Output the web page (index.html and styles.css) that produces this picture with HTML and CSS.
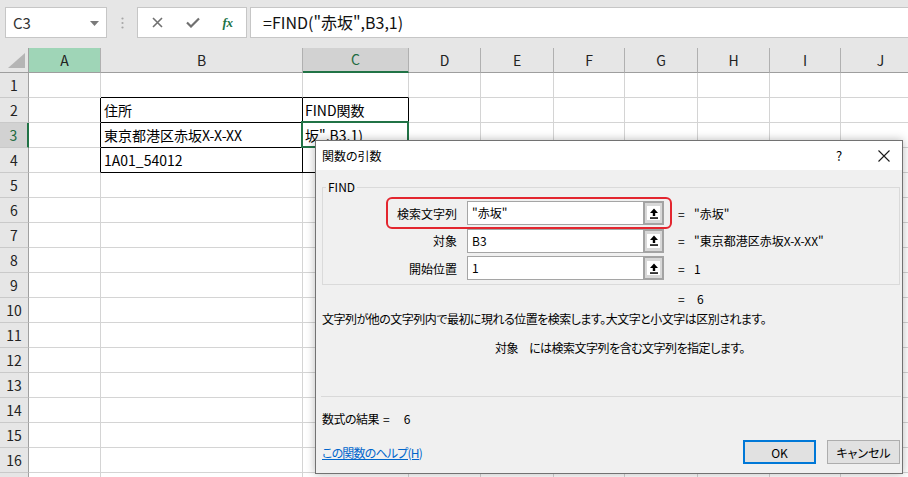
FILE: index.html
```html
<!DOCTYPE html>
<html lang="ja">
<head>
<meta charset="utf-8">
<title>関数の引数</title>
<link rel="stylesheet" href="styles.css">
</head>
<body>
<div class="app">
  <div class="toolbar">
    <div class="namebox">
      <span class="nb-text">C3</span>
      <svg class="caret" width="9" height="5" viewBox="0 0 9 5"><path d="M0 0H9L4.5 5Z" fill="#7a7a7a"/></svg>
    </div>
    <div class="grip">
      <svg width="3" height="12" viewBox="0 0 3 12"><circle cx="1.5" cy="1.5" r="1.1" fill="#a6a6a6"/><circle cx="1.5" cy="6" r="1.1" fill="#a6a6a6"/><circle cx="1.5" cy="10.5" r="1.1" fill="#a6a6a6"/></svg>
    </div>
    <div class="fxbox">
      <span class="fxslot"><svg width="11" height="11" viewBox="0 0 11 11"><path d="M1 1L10 10M10 1L1 10" stroke="#707070" stroke-width="1.6"/></svg></span>
      <span class="fxslot"><svg width="14" height="11" viewBox="0 0 14 11"><path d="M1 5.5L5 9.5L13 1.5" fill="none" stroke="#707070" stroke-width="2.2"/></svg></span>
      <span class="fxslot fx">fx</span>
    </div>
    <div class="formula">=FIND("赤坂",B3,1)</div>
  </div>

  <div class="sheet">
    <div class="row hdr">
      <div class="c rh corner"><svg width="28" height="24" viewBox="0 0 28 24"><path d="M8 20H25V5Z" fill="#b5b5b5"/></svg></div>
      <div class="c ca sel-a">A</div><div class="c cb">B</div><div class="c cc sel-c">C</div><div class="c cd">D</div><div class="c ce">E</div><div class="c cf">F</div><div class="c cg">G</div><div class="c ch">H</div><div class="c ci">I</div><div class="c cj">J</div>
    </div>
    <div class="row"><div class="c rh">1</div><div class="c ca"></div><div class="c cb bB"></div><div class="c cc bB"></div><div class="c cd"></div><div class="c ce"></div><div class="c cf"></div><div class="c cg"></div><div class="c ch"></div><div class="c ci"></div><div class="c cj"></div></div>
    <div class="row"><div class="c rh">2</div><div class="c ca bR"></div><div class="c cb bR bB">住所</div><div class="c cc bR bB">FIND関数</div><div class="c cd"></div><div class="c ce"></div><div class="c cf"></div><div class="c cg"></div><div class="c ch"></div><div class="c ci"></div><div class="c cj"></div></div>
    <div class="row"><div class="c rh sel-r">3</div><div class="c ca bR"></div><div class="c cb bR bB">東京都港区赤坂X-X-XX</div><div class="c cc bR bB active">坂",B3,1)</div><div class="c cd"></div><div class="c ce"></div><div class="c cf"></div><div class="c cg"></div><div class="c ch"></div><div class="c ci"></div><div class="c cj"></div></div>
    <div class="row"><div class="c rh">4</div><div class="c ca bR"></div><div class="c cb bR bB">1A01_54012</div><div class="c cc bR bB"></div><div class="c cd"></div><div class="c ce"></div><div class="c cf"></div><div class="c cg"></div><div class="c ch"></div><div class="c ci"></div><div class="c cj"></div></div>
    <div class="row"><div class="c rh">5</div><div class="c ca"></div><div class="c cb"></div><div class="c cc"></div><div class="c cd"></div><div class="c ce"></div><div class="c cf"></div><div class="c cg"></div><div class="c ch"></div><div class="c ci"></div><div class="c cj"></div></div>
    <div class="row"><div class="c rh">6</div><div class="c ca"></div><div class="c cb"></div><div class="c cc"></div><div class="c cd"></div><div class="c ce"></div><div class="c cf"></div><div class="c cg"></div><div class="c ch"></div><div class="c ci"></div><div class="c cj"></div></div>
    <div class="row"><div class="c rh">7</div><div class="c ca"></div><div class="c cb"></div><div class="c cc"></div><div class="c cd"></div><div class="c ce"></div><div class="c cf"></div><div class="c cg"></div><div class="c ch"></div><div class="c ci"></div><div class="c cj"></div></div>
    <div class="row"><div class="c rh">8</div><div class="c ca"></div><div class="c cb"></div><div class="c cc"></div><div class="c cd"></div><div class="c ce"></div><div class="c cf"></div><div class="c cg"></div><div class="c ch"></div><div class="c ci"></div><div class="c cj"></div></div>
    <div class="row"><div class="c rh">9</div><div class="c ca"></div><div class="c cb"></div><div class="c cc"></div><div class="c cd"></div><div class="c ce"></div><div class="c cf"></div><div class="c cg"></div><div class="c ch"></div><div class="c ci"></div><div class="c cj"></div></div>
    <div class="row"><div class="c rh">10</div><div class="c ca"></div><div class="c cb"></div><div class="c cc"></div><div class="c cd"></div><div class="c ce"></div><div class="c cf"></div><div class="c cg"></div><div class="c ch"></div><div class="c ci"></div><div class="c cj"></div></div>
    <div class="row"><div class="c rh">11</div><div class="c ca"></div><div class="c cb"></div><div class="c cc"></div><div class="c cd"></div><div class="c ce"></div><div class="c cf"></div><div class="c cg"></div><div class="c ch"></div><div class="c ci"></div><div class="c cj"></div></div>
    <div class="row"><div class="c rh">12</div><div class="c ca"></div><div class="c cb"></div><div class="c cc"></div><div class="c cd"></div><div class="c ce"></div><div class="c cf"></div><div class="c cg"></div><div class="c ch"></div><div class="c ci"></div><div class="c cj"></div></div>
    <div class="row"><div class="c rh">13</div><div class="c ca"></div><div class="c cb"></div><div class="c cc"></div><div class="c cd"></div><div class="c ce"></div><div class="c cf"></div><div class="c cg"></div><div class="c ch"></div><div class="c ci"></div><div class="c cj"></div></div>
    <div class="row"><div class="c rh">14</div><div class="c ca"></div><div class="c cb"></div><div class="c cc"></div><div class="c cd"></div><div class="c ce"></div><div class="c cf"></div><div class="c cg"></div><div class="c ch"></div><div class="c ci"></div><div class="c cj"></div></div>
    <div class="row"><div class="c rh">15</div><div class="c ca"></div><div class="c cb"></div><div class="c cc"></div><div class="c cd"></div><div class="c ce"></div><div class="c cf"></div><div class="c cg"></div><div class="c ch"></div><div class="c ci"></div><div class="c cj"></div></div>
    <div class="row"><div class="c rh">16</div><div class="c ca"></div><div class="c cb"></div><div class="c cc"></div><div class="c cd"></div><div class="c ce"></div><div class="c cf"></div><div class="c cg"></div><div class="c ch"></div><div class="c ci"></div><div class="c cj"></div></div>
    <div class="row"><div class="c rh"></div><div class="c ca"></div><div class="c cb"></div><div class="c cc"></div><div class="c cd"></div><div class="c ce"></div><div class="c cf"></div><div class="c cg"></div><div class="c ch"></div><div class="c ci"></div><div class="c cj"></div></div>
  </div>

  <div class="dialog">
    <div class="titlebar">
      <span class="title">関数の引数</span>
      <span class="help">?</span>
      <span class="close"><svg width="12" height="12" viewBox="0 0 12 12"><path d="M0.5 0.5L11.5 11.5M11.5 0.5L0.5 11.5" stroke="#1a1a1a" stroke-width="1.1"/></svg></span>
    </div>
    <div class="dbody">
      <fieldset class="group">
        <legend>FIND</legend>
        <div class="args">
          <div class="hl"></div>
          <div class="lbl">検索文字列</div>
          <div class="field"><span class="fval">"赤坂"</span><span class="pick"><span class="pick-in"><svg width="10" height="11" viewBox="0 0 10 11"><path d="M5 0.5L9 5H6.2V8H3.8V5H1Z" fill="#000"/><rect x="1" y="9.3" width="8" height="1.5" fill="#000"/></svg></span></span></div>
          <div class="res"><span class="eq">=</span><span>"赤坂"</span></div>

          <div class="lbl">対象</div>
          <div class="field"><span class="fval">B3</span><span class="pick"><span class="pick-in"><svg width="10" height="11" viewBox="0 0 10 11"><path d="M5 0.5L9 5H6.2V8H3.8V5H1Z" fill="#000"/><rect x="1" y="9.3" width="8" height="1.5" fill="#000"/></svg></span></span></div>
          <div class="res"><span class="eq">=</span><span>"東京都港区赤坂X-X-XX"</span></div>

          <div class="lbl">開始位置</div>
          <div class="field"><span class="fval">1</span><span class="pick"><span class="pick-in"><svg width="10" height="11" viewBox="0 0 10 11"><path d="M5 0.5L9 5H6.2V8H3.8V5H1Z" fill="#000"/><rect x="1" y="9.3" width="8" height="1.5" fill="#000"/></svg></span></span></div>
          <div class="res"><span class="eq">=</span><span>1</span></div>
        </div>
      </fieldset>
      <div class="total"><span class="eq2">=</span><span>6</span></div>
      <p class="desc">文字列が他の文字列内で最初に現れる位置を検索します。大文字と小文字は区別されます。</p>
      <p class="desc2"><span class="argname">対象</span><span>には検索文字列を含む文字列を指定します。</span></p>
      <div class="sep"></div>
      <div class="result"><span class="rlabel">数式の結果</span><span class="req">=</span><span class="rval">6</span></div>
      <div class="footer">
        <a class="helplink" href="#">この関数のヘルプ(H)</a>
        <span class="btn ok">OK</span>
        <span class="btn cancel">キャンセル</span>
      </div>
    </div>
  </div>
</div>
</body>
</html>
```

FILE: styles.css
```css
html, body {
  margin: 0;
  padding: 0;
  background: #ffffff;
}
body {
  font-family: "Noto Sans CJK JP", "Noto Sans", sans-serif;
  color: #000;
}
.app {
  position: relative;
  width: 908px;
  height: 477px;
  overflow: hidden;
}

/* ---------- toolbar ---------- */
.toolbar {
  display: flex;
  align-items: flex-start;
  height: 48px;
  box-sizing: border-box;
  padding: 7px 0 0 5px;
  background: #e6e6e6;
}
.namebox {
  box-sizing: border-box;
  width: 102px;
  height: 31px;
  background: #fff;
  border: 1px solid #c6c6c6;
  display: flex;
  align-items: center;
  padding: 0 7px 0 7px;
}
.nb-text {
  flex: 1;
  font-size: 15px;
  color: #333;
  line-height: 29px;
}
.caret { margin-top: 1px; }
.grip {
  width: 30px;
  height: 31px;
  display: flex;
  align-items: center;
  justify-content: center;
}
.fxbox {
  box-sizing: border-box;
  width: 110px;
  height: 31px;
  background: #fff;
  border: 1px solid #c6c6c6;
  display: flex;
  align-items: center;
  padding-left: 2px;
}
.fxslot {
  width: 35px;
  display: flex;
  justify-content: center;
  align-items: center;
}
.fx {
  font-family: "Liberation Serif", serif;
  font-style: italic;
  font-weight: bold;
  font-size: 13px;
  color: #217346;
  letter-spacing: -0.5px;
}
.formula {
  flex: 1;
  margin-left: 3px;
  box-sizing: border-box;
  height: 31px;
  background: #fff;
  border: 1px solid #c6c6c6;
  border-right: none;
  padding-left: 12px;
  font-size: 16px;
  line-height: 29px;
  color: #111;
  white-space: nowrap;
}

/* ---------- sheet ---------- */
.row {
  display: flex;
  height: 25px;
}
.c {
  box-sizing: border-box;
  flex: none;
  height: 25px;
  border-right: 1px solid #d4d4d4;
  border-bottom: 1px solid #d4d4d4;
  font-size: 14px;
  line-height: 24px;
  padding-left: 3px;
  white-space: nowrap;
}
.ca { width: 72px; }
.cb { width: 202px; }
.cc { width: 106px; padding-left: 2px; }
.cd { width: 72px; }
.ce { width: 73px; }
.cf { width: 71px; }
.cg { width: 73px; }
.ch { width: 72px; }
.ci { width: 71px; }
.cj { width: 80px; }

.rh {
  width: 29px;
  padding: 0;
  text-align: center;
  background: #e6e6e6;
  border-right-color: #a0a0a0;
  border-bottom-color: #c9c9c9;
  font-size: 14px;
  color: #222;
}
.hdr .c {
  background: #e6e6e6;
  text-align: center;
  padding: 0;
  border-right-color: #b0b0b0;
  border-bottom-color: #9e9e9e;
  font-size: 14px;
  color: #222;
}
.hdr .corner {
  position: relative;
  border-right-color: #a0a0a0;
}
.corner svg { display: block; }
.hdr .sel-a {
  background: #9fd5b7;
}
.hdr .sel-c {
  background: #d2d2d2;
  color: #1e6b41;
  border-bottom: 2px solid #217346;
  line-height: 23px;
}
.rh.sel-r {
  background: #d2d2d2;
  color: #1e6b41;
  border-right: 2px solid #217346;
}
.bR { border-right-color: #000; }
.bB { border-bottom-color: #000; }
.active {
  position: relative;
}
.active::after {
  content: "";
  position: absolute;
  left: -2px;
  top: -2px;
  right: -1px;
  bottom: -1px;
  border: 2px solid #217346;
}

/* ---------- dialog ---------- */
.dialog {
  position: absolute;
  left: 315px;
  top: 140px;
  width: 588px;
  height: 334px;
  box-sizing: border-box;
  border: 1px solid #727272;
  background: #f0f0f0;
  box-shadow: 0 0 9px rgba(0, 0, 0, 0.28);
  font-size: 12px;
  color: #000;
  display: flex;
  flex-direction: column;
}
.titlebar {
  height: 29px;
  flex: none;
  background: #fff;
  display: flex;
  align-items: center;
  padding-left: 6px;
}
.title {
  flex: 1;
  font-size: 12px;
  font-feature-settings: "palt";
}
.help {
  width: 20px;
  text-align: center;
  font-size: 13px;
  margin-right: 17px;
}
.close {
  width: 36px;
  display: flex;
  justify-content: center;
}
.close svg { display: block; }
.dbody {
  flex: 1;
  padding: 0 2px 0 6px;
}
.group {
  margin: 10px 0 0 0;
  padding: 7px 0 4px 0;
  border: 1px solid #dadada;
  min-width: 0;
}
.group legend {
  padding: 0 2px;
  margin-left: 3px;
  font-size: 12px;
  line-height: 14px;
}
.args {
  position: relative;
  display: grid;
  grid-template-columns: 134px 197px auto;
  grid-auto-rows: 24px;
  column-gap: 10px;
  row-gap: 3.5px;
  align-items: center;
}
.hl {
  position: absolute;
  left: 63px;
  top: -4px;
  width: 286px;
  height: 32px;
  box-sizing: border-box;
  border: 2px solid #e3262f;
  border-radius: 6px;
}
.lbl {
  text-align: right;
  font-size: 12px;
}
.field {
  display: flex;
  height: 24px;
  box-sizing: border-box;
  background: #fff;
  border: 1px solid #a5a5a5;
  border-right: none;
}
.fval {
  flex: 1;
  padding-left: 4px;
  line-height: 22px;
  font-size: 12px;
}
.pick {
  box-sizing: border-box;
  width: 21px;
  height: 24px;
  margin-top: -1px;
  border: 2px solid #a3a3a3;
  background: #d8d8d8;
  display: flex;
  align-items: center;
  justify-content: center;
}
.pick-in {
  width: 13px;
  height: 14px;
  background: #fff;
  display: flex;
  align-items: center;
  justify-content: center;
}
.pick-in svg { display: block; }
.res {
  display: flex;
  white-space: nowrap;
  padding-left: 4px;
}
.eq {
  width: 16px;
}
.total {
  margin: 6px 0 0 0;
  padding-left: 356px;
  line-height: 16px;
  display: flex;
}
.eq2 { width: 19px; }
.desc {
  margin: 4px 0 0 0;
  line-height: 16px;
  white-space: nowrap;
  font-feature-settings: "palt";
  letter-spacing: -0.5px;
}
.desc2 {
  margin: 13px 0 0 0;
  line-height: 16px;
  padding-left: 173px;
  white-space: nowrap;
  font-feature-settings: "palt";
  letter-spacing: -0.5px;
}
.argname {
  display: inline-block;
  width: 34px;
}
.sep {
  height: 1px;
  background: #d9d9d9;
  margin: 40px -1px 0 -1px;
}
.result {
  margin-top: 14px;
  line-height: 16px;
  display: flex;
  font-feature-settings: "palt";
}
.rlabel {
  letter-spacing: -0.5px;
}
.req {
  margin-left: 4px;
}
.rval {
  margin-left: 14px;
}
.footer {
  margin-top: 13px;
  display: flex;
  align-items: center;
  height: 24px;
}
.helplink {
  color: #0066cc;
  text-decoration: underline;
  font-feature-settings: "palt";
  letter-spacing: -0.8px;
}
.btn {
  box-sizing: border-box;
  width: 73px;
  height: 24px;
  background: #e1e1e1;
  display: flex;
  align-items: center;
  justify-content: center;
  font-size: 12px;
  font-feature-settings: "palt";
}
.ok {
  margin-left: auto;
  border: 2px solid #0078d7;
}
.cancel {
  margin-left: 11px;
  border: 1px solid #adadad;
}
```
